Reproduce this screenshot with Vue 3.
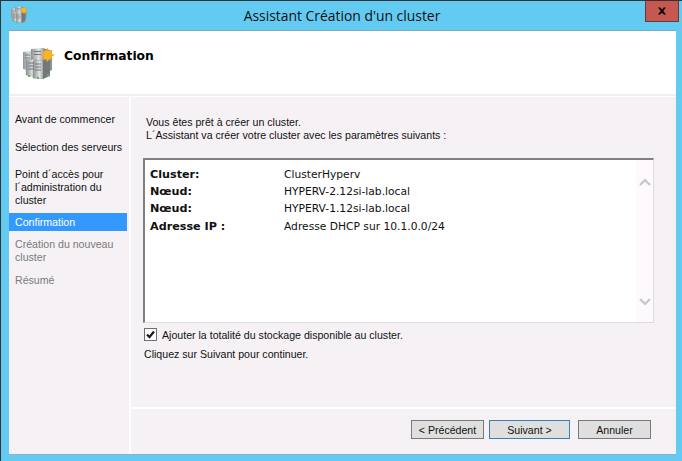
<script setup>
const steps = [
  { label: 'Avant de commencer', state: '', gap: 15 },
  { label: 'Sélection des serveurs', state: '', gap: 14 },
  { label: 'Point d´accès pour l\u2060´administration du cluster', state: '', gap: 6 },
  { label: 'Confirmation', state: 'active', gap: 7 },
  { label: 'Création du nouveau cluster', state: 'off', gap: 10 },
  { label: 'Résumé', state: 'off', gap: 0 }
]
const rows = [
  ['Cluster:', 'ClusterHyperv'],
  ['Nœud:', 'HYPERV-2.12si-lab.local'],
  ['Nœud:', 'HYPERV-1.12si-lab.local'],
  ['Adresse IP :', 'Adresse DHCP sur 10.1.0.0/24']
]
</script>

<template>
  <div class="window">
    <div class="titlebar">
      <svg class="appicon" viewBox="0 0 32 32" width="17" height="17">
        <use href="#srv" />
      </svg>
      <span class="title">Assistant Création d'un cluster</span>
      <div class="close">
        <svg viewBox="0 0 10 8" width="10" height="8"><path d="M1 .5h2.200L5 2.600 6.800.5H9L6.200 4 9 7.500H6.800L5 5.400 3.200 7.500H1L3.800 4z" fill="#000"/></svg>
      </div>
    </div>
    <div class="client">
      <header class="head">
        <svg class="headicon" viewBox="0 0 32 32" width="32" height="32">
          <defs>
            <linearGradient id="g" x1="0" x2="1">
              <stop offset="0" stop-color="#8d9294"/><stop offset=".65" stop-color="#dfe2e3"/><stop offset="1" stop-color="#a8acae"/>
            </linearGradient>
            <g id="srv">
              <path d="M0 5l9-1v20l-9-2z" fill="url(#g)"/>
              <path d="M8 2l12-1v21l-12 2z" fill="url(#g)"/>
              <path d="M20 1l9 3v19l-9 4z" fill="#8b9092"/>
              <path d="M3 13l10-1v18l-10-2z" fill="url(#g)" stroke="#8a8a8a" stroke-width=".4"/>
              <path d="M10 14l10-1v19l-10-1z" fill="url(#g)" stroke="#8a8a8a" stroke-width=".4"/>
              <path d="M20 13l7 1v15l-7 3z" fill="#74787a"/>
              <path d="M2 8h5M2 11h5M11 4.500h7M11 7.500h7M5 16h6M5 19h6M5 22h6M12 17h6M12 20h6M12 23h6" stroke="#6d6d6d" stroke-width=".9"/>
              <path d="M5 28h2v2H5zM14 30h2v2h-2zM24 27h2v2h-2z" fill="#58c236"/>
              <path d="M24.500.5L26 4.500 29.800 2.700 28 6.500 32 8 28 9.500 29.800 13.300 26 11.500 24.500 15.500 23 11.500 19.200 13.300 21 9.500 17 8 21 6.500 19.200 2.700 23 4.500z" fill="#f7a51a"/>
              <circle cx="24.500" cy="8" r="4.500" fill="#fab522"/>
            </g>
          </defs>
          <use href="#srv" />
        </svg>
        <h1>Confirmation</h1>
      </header>
      <div class="main">
        <nav class="steps">
          <div
            v-for="s in steps"
            :key="s.label"
            class="step"
            :class="s.state"
            :style="{ marginBottom: s.gap + 'px' }"
          >{{ s.label }}</div>
        </nav>
        <section class="panel">
          <div class="content">
            <p class="intro">Vous êtes prêt à créer un cluster.<br>L´Assistant va créer votre cluster avec les paramètres suivants :</p>
            <div class="box">
              <div class="rows">
                <div v-for="(r, i) in rows" :key="i" class="row">
                  <b>{{ r[0] }}</b><span>{{ r[1] }}</span>
                </div>
              </div>
              <div class="scroll">
                <svg viewBox="0 0 12 8" width="12" height="8"><path d="M1 7l5-5 5 5" fill="none" stroke="#c6c6c6" stroke-width="2.200"/></svg>
                <svg viewBox="0 0 12 8" width="12" height="8"><path d="M1 1l5 5 5-5" fill="none" stroke="#c6c6c6" stroke-width="2.200"/></svg>
              </div>
            </div>
            <label class="check">
              <span class="cb">
                <svg viewBox="0 0 11 11" width="11" height="11"><path d="M2 5.500l2.500 2.500L9 2.500" fill="none" stroke="#1c1c1c" stroke-width="2.200"/></svg>
              </span>
              Ajouter la totalité du stockage disponible au cluster.
            </label>
            <p class="hint">Cliquez sur Suivant pour continuer.</p>
          </div>
          <footer class="foot">
            <button class="btn prev">&lt; Précédent</button>
            <button class="btn next">Suivant &gt;</button>
            <button class="btn cancel">Annuler</button>
          </footer>
        </section>
      </div>
    </div>
  </div>
</template>

<style>
html, body { margin: 0; padding: 0; }
</style>
<style scoped>
.window {
  position: relative;
  width: 682px;
  height: 461px;
  box-sizing: border-box;
  background: #63caf2;
  border-top: 1px solid #333;
  border-left: 1px solid #333;
  padding: 0 6px 7px 8px;
  display: flex;
  flex-direction: column;
  font-family: "Liberation Sans", Arial, sans-serif;
  font-size: 10.6px;
  color: #111;
  overflow: hidden;
}
.titlebar {
  height: 29px;
  flex: none;
  position: relative;
  display: flex;
  align-items: center;
  justify-content: center;
}
.appicon { position: absolute; left: 2px; top: 5px; }
.title {
  font-family: "Open Sans", sans-serif;
  font-size: 13.900px;
  color: #111;
  margin-right: 1px;
}
.close {
  position: absolute;
  right: -3px;
  top: -1px;
  width: 34px;
  height: 22px;
  box-sizing: border-box;
  background: #c75850;
  border: 1px solid #5c3c3c;
  display: flex;
  align-items: center;
  justify-content: center;
}
.client {
  flex: 1;
  display: flex;
  flex-direction: column;
  border-top: 1px solid #7fa9c0;
  box-shadow: 0 1px 0 #8fb3c6;
  background: #fff;
  min-height: 0;
}
.head {
  height: 63px;
  flex: none;
  display: flex;
  align-items: center;
  border-bottom: 2px solid #f1eff2;
}
.headicon { margin-left: 14px; margin-top: 1px; }
.head h1 {
  font-family: "DejaVu Sans", sans-serif;
  font-weight: 700;
  font-size: 12.300px;
  margin: 0 0 13px 9px;
  color: #000;
}
.main {
  flex: 1;
  display: flex;
  min-height: 0;
  border-top: 1px solid #fff;
}
.steps {
  width: 120px;
  flex: none;
  background: #f5f1f5;
  margin-right: 2px;
  padding-top: 16px;
  box-sizing: border-box;
}
.step {
  padding: 0 2px 0 6px;
  line-height: 13px;
  margin-right: 2px;
}
.step.active {
  background: #3399ff;
  color: #fff;
  line-height: 18px;
}
.step.off { color: #7a7a7a; }
.panel {
  flex: 1;
  display: flex;
  flex-direction: column;
  background: #f5f1f5;
  min-width: 0;
}
.content {
  flex: 1;
  padding: 19px 22px 0 12px;
}
.intro { margin: 0; line-height: 13px; padding-left: 3px; }
.box {
  margin-top: 16px;
  height: 165px;
  box-sizing: border-box;
  background: #fff;
  border-top: 2px solid #808080;
  border-left: 2px solid #808080;
  border-right: 1px solid #dcdcdc;
  border-bottom: 1px solid #dcdcdc;
  display: flex;
}
.rows {
  flex: 1;
  padding: 6px 0 0 5px;
  font-family: "DejaVu Sans", sans-serif;
  font-size: 10.700px;
  color: #111;
}
.row { display: flex; height: 17px; line-height: 17px; }
.row:last-child { margin-top: 1px; }
.row b { width: 134px; flex: none; font-size: 11.200px; }
.scroll {
  width: 17px;
  background: #fdf9fd;
  display: flex;
  flex-direction: column;
  justify-content: space-between;
  align-items: center;
  padding: 18px 0 16px;
  box-sizing: border-box;
}
.check {
  display: flex;
  align-items: center;
  margin-top: 5px;
  height: 13px;
  padding-left: 1px;
}
.cb {
  width: 11px;
  height: 11px;
  border: 1px solid #707070;
  background: #fff;
  margin-right: 5px;
  display: flex;
}
.hint { margin: 7px 0 0 1px; line-height: 13px; }
.foot {
  height: 47px;
  flex: none;
  border-top: 2px solid #fff;
  display: flex;
  align-items: flex-start;
  padding: 11px 0 0 280px;
  box-sizing: border-box;
}
.btn {
  height: 19px;
  box-sizing: border-box;
  background: #dfdfdf;
  border: 1px solid #7a7a7a;
  font: inherit;
  color: #111;
  padding: 0;
}
.prev { width: 73px; }
.next { width: 81px; margin-left: 5px; border-color: #3c7fb1; }
.cancel { width: 73px; margin-left: 8px; }
</style>
